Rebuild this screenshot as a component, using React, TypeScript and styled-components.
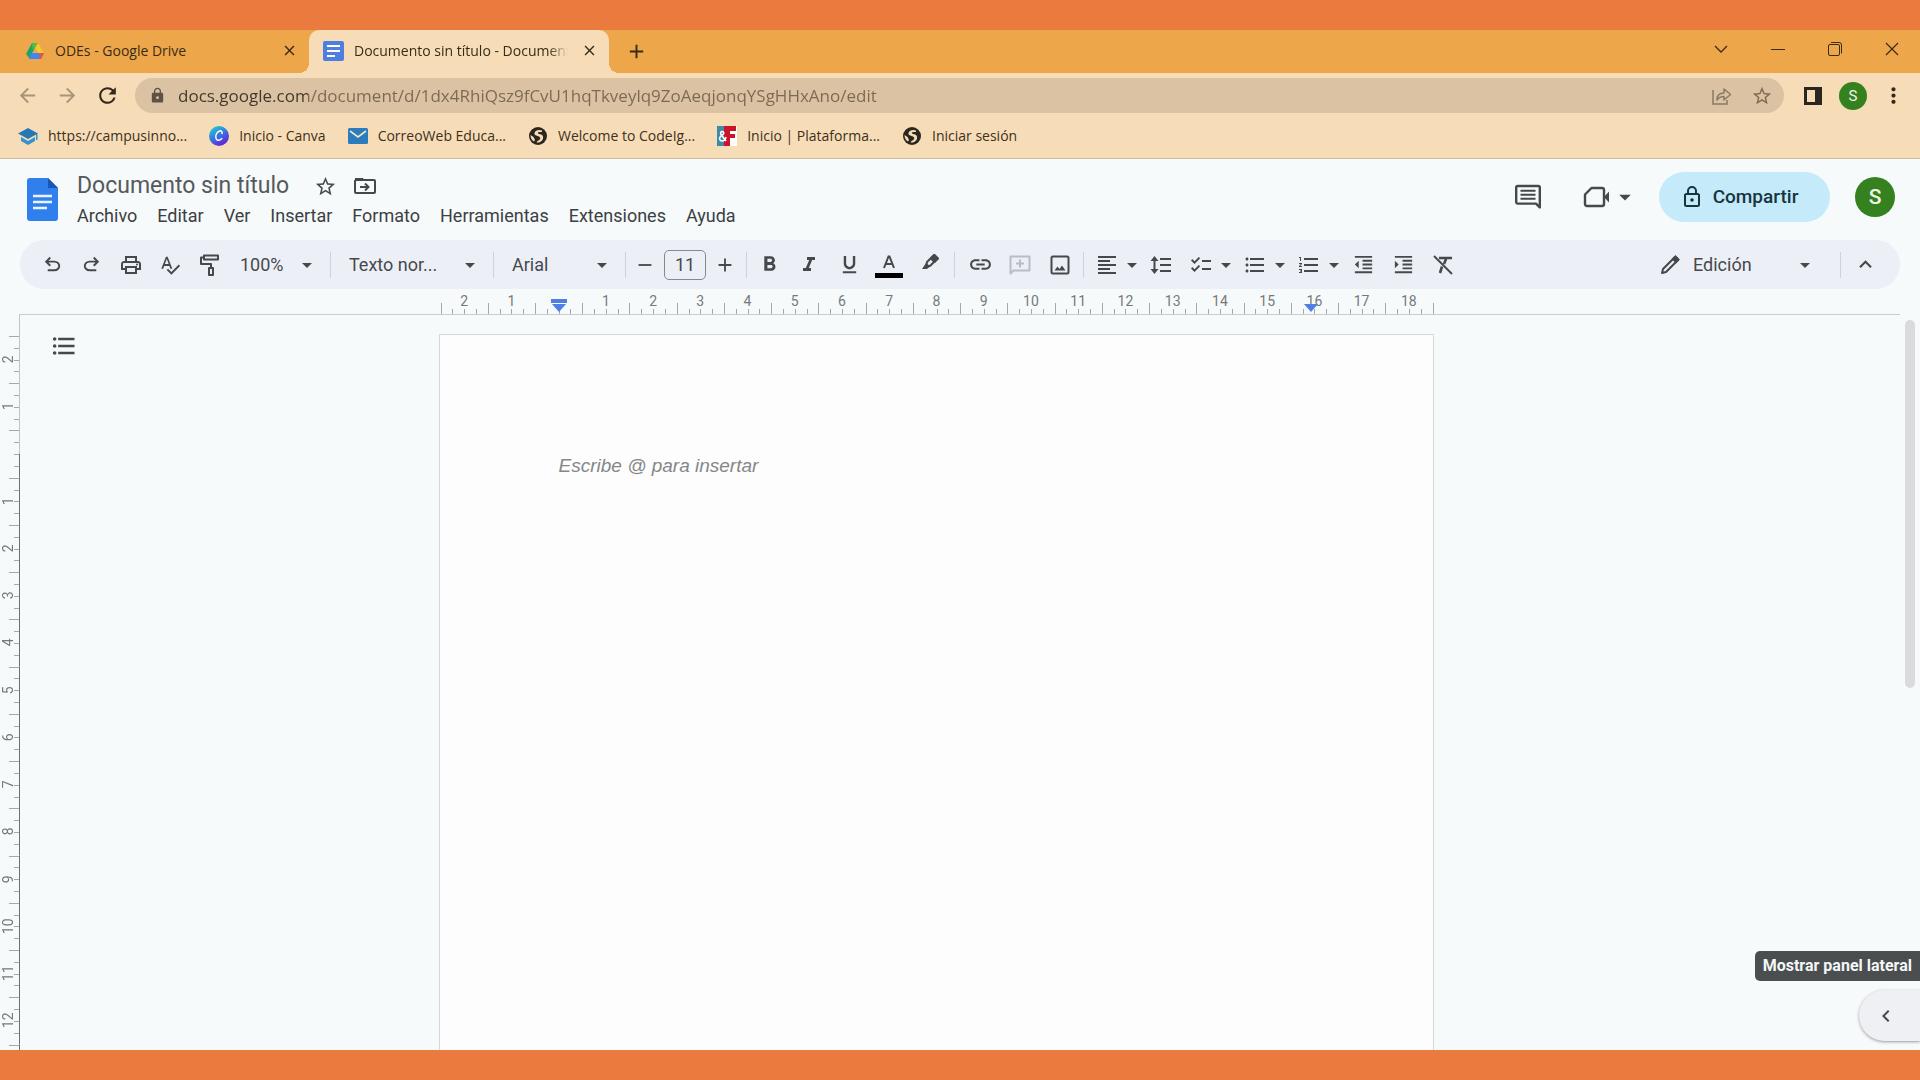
import React, { useEffect, useState } from "react";
import styled, { createGlobalStyle, css } from "styled-components";
import {
  MdOutlinePrint,
  MdSpellcheck,
  MdArrowDropDown,
  MdAdd,
  MdRemove,
  MdFormatBold,
  MdFormatItalic,
  MdFormatUnderlined,
  MdLink,
  MdFormatAlignLeft,
  MdChecklist,
  MdFormatListBulleted,
  MdFormatListNumbered,
  MdFormatIndentDecrease,
  MdFormatIndentIncrease,
  MdKeyboardArrowUp,
  MdKeyboardArrowLeft,
  MdArrowBack,
  MdArrowForward,
  MdRefresh,
  MdLock,
  MdStarBorder,
  MdMoreVert,
  MdClose,
} from "react-icons/md";

const chromeFont = '"Open Sans", "Noto Sans", sans-serif';
const appFont = 'Roboto, "Liberation Sans", sans-serif';
const ink = "#45494c";

const GlobalStyle = createGlobalStyle`
  * { box-sizing: border-box; }
  html, body { margin: 0; }
  body { font-family: ${appFont}; color: ${ink}; overflow: hidden; }
  button, input, select { font: inherit; color: inherit; }
`;

const Frame = styled.div`
  height: 100vh;
  padding: 30px 0;
  background: #ea7a3e;
  display: flex;
`;

const Window = styled.div`
  flex: 1;
  min-width: 0;
  display: flex;
  flex-direction: column;
  overflow: hidden;
  position: relative;
  background: #f6fafb;
`;

const plainButton = css`
  border: 0;
  padding: 0;
  margin: 0;
  background: none;
  display: flex;
  align-items: center;
  justify-content: center;
  flex: none;
  cursor: pointer;
`;

/* ---------- Browser chrome ---------- */

const TabStrip = styled.div`
  display: flex;
  height: 43px;
  flex: none;
  background: #eda74a;
  color: #3a2b16;
  font: 14px/20px ${chromeFont};
`;

const Tab = styled.div<{ $active?: boolean }>`
  flex: none;
  width: ${(p) => (p.$active ? 300 : 309)}px;
  padding: 0 9px 2px ${(p) => (p.$active ? 14 : 25)}px;
  display: flex;
  align-items: center;
  gap: 10px;
  position: relative;
  ${(p) =>
    p.$active &&
    css`
      background: #f6ddb8;
      border-radius: 10px 10px 0 0;
      &::before,
      &::after {
        content: "";
        position: absolute;
        bottom: 0;
        width: 10px;
        height: 10px;
      }
      &::before {
        left: -10px;
        background: radial-gradient(circle at 0 0, transparent 10px, #f6ddb8 10px);
      }
      &::after {
        right: -10px;
        background: radial-gradient(circle at 100% 0, transparent 10px, #f6ddb8 10px);
      }
    `}
`;

const TabTitle = styled.span<{ $fade?: boolean }>`
  flex: 1;
  min-width: 0;
  overflow: hidden;
  white-space: nowrap;
  ${(p) => p.$fade && css`mask-image: linear-gradient(to right, #000 91%, transparent);`}
`;

const TabClose = styled.button`
  ${plainButton}
  width: 22px;
  height: 22px;
`;

const NewTab = styled.button`
  ${plainButton}
  width: 54px;
`;

const WindowControls = styled.div`
  margin-left: auto;
  display: flex;
  padding-bottom: 6px;
`;

const WindowButton = styled.button`
  ${plainButton}
  width: 57px;
`;

const AddressRow = styled.div`
  height: 45px;
  flex: none;
  background: #f6ddb8;
  display: flex;
  align-items: center;
  padding: 0 7px;
  color: #3a2b16;
`;

const NavButton = styled.button<{ $muted?: boolean }>`
  ${plainButton}
  width: 40px;
  height: 36px;
  color: ${(p) => (p.$muted ? "#a8947a" : "#33281a")};
`;

const Omnibox = styled.div`
  flex: 1;
  margin: 0 9px 0 8px;
  height: 35px;
  border-radius: 18px;
  background: #dac2a2;
  display: flex;
  align-items: center;
  padding: 0 2px 0 14px;
`;

const UrlLabel = styled.label`
  flex: 1;
  display: grid;
  align-items: center;
  font: 17px/24px ${chromeFont};
  margin-left: 12px;
  & > * {
    grid-area: 1 / 1;
  }
`;

const UrlInput = styled.input`
  width: 100%;
  border: 0;
  padding: 0;
  outline: 0;
  color: transparent;
  background: linear-gradient(to right, #40362a 130px, #7b6952 130px);
  background-clip: text;
  caret-color: #40362a;
`;

const BookmarkBar = styled.nav`
  height: 41px;
  flex: none;
  background: #f6ddb8;
  border-bottom: 1px solid #cdb9a0;
  display: flex;
  align-items: center;
  gap: 22px;
  padding: 0 18px 4px;
`;

const Bookmark = styled.a`
  display: flex;
  align-items: center;
  gap: 10px;
  color: #40301c;
  text-decoration: none;
  white-space: nowrap;
  font: 14px/20px ${chromeFont};
`;

const Avatar = styled.button<{ $large?: boolean }>`
  ${plainButton}
  width: ${(p) => (p.$large ? 40 : 28)}px;
  height: ${(p) => (p.$large ? 40 : 28)}px;
  border-radius: 50%;
  background: #35801f;
  color: #eef6ea;
  font-size: ${(p) => (p.$large ? 21 : 15)}px;
  font-weight: ${(p) => (p.$large ? 500 : 400)};
`;

/* ---------- Document header ---------- */

const Header = styled.header`
  height: 81px;
  flex: none;
  display: flex;
  align-items: flex-start;
  padding: 12px 25px 0 26px;
`;

const LogoLink = styled.a`
  flex: none;
  margin: 7px 17px 0 0;
  display: block;
  height: 44px;
`;

const TitleBlock = styled.div`
  display: flex;
  flex-direction: column;
`;

const TitleRow = styled.div`
  display: flex;
  align-items: center;
  height: 30px;
`;

const DocTitle = styled.h1`
  margin: 0 16px 0 0;
  font: 400 23px/30px ${appFont};
  color: #55595c;
`;

const TitleIcon = styled.button`
  ${plainButton}
  width: 40px;
  height: 30px;
`;

const MenuBar = styled.nav`
  display: flex;
  gap: 20px;
  height: 30px;
`;

const MenuItem = styled.button`
  ${plainButton}
  font-size: 18px;
  line-height: 30px;
  color: #3c4043;
`;

const HeaderActions = styled.div`
  margin-left: auto;
  height: 52px;
  display: flex;
  align-items: center;
`;

const HeaderButton = styled.button<{ $gap: number }>`
  ${plainButton}
  height: 40px;
  margin-right: ${(p) => p.$gap}px;
`;

const ShareButton = styled.button`
  ${plainButton}
  width: 171px;
  height: 50px;
  margin-right: 25px;
  padding-right: 8px;
  border-radius: 25px;
  background: #c5eafa;
  color: #17353f;
  gap: 12px;
  font: 500 19px/24px ${appFont};
`;

/* ---------- Toolbar ---------- */

const Toolbar = styled.div`
  height: 49px;
  flex: none;
  margin: 0 20px;
  padding: 0 15px 0 13px;
  border-radius: 25px;
  background: #edeff7;
  display: flex;
  align-items: center;
  font-size: 18px;
`;

const Tool = styled.button<{ $w?: number; $muted?: boolean }>`
  ${plainButton}
  width: ${(p) => p.$w || 40}px;
  height: 36px;
  color: ${(p) => (p.$muted ? "#b9bcc2" : ink)};
`;

const ComboTool = styled.button`
  ${plainButton}
  width: 54px;
  height: 36px;
  padding-left: 8px;
  gap: 1px;
  justify-content: flex-start;
  & > svg {
    flex: none;
  }
`;

const Divider = styled.span<{ $space?: number }>`
  flex: none;
  width: 1px;
  height: 26px;
  margin: 0 ${(p) => p.$space || 0}px;
  background: #cfd2d8;
`;

const Picker = styled.label<{ $w: number; $after?: number }>`
  flex: none;
  width: ${(p) => p.$w}px;
  margin-right: ${(p) => p.$after || 0}px;
  display: grid;
  align-items: center;
  & > * {
    grid-area: 1 / 1;
  }
  & > svg {
    justify-self: end;
    margin-right: 11px;
    pointer-events: none;
  }
`;

const Select = styled.select<{ $pad: number }>`
  appearance: none;
  width: 100%;
  height: 32px;
  border: 0;
  outline: 0;
  padding: 0 0 0 ${(p) => p.$pad}px;
  background: none;
`;

const SizeInput = styled.input`
  width: 42px;
  height: 30px;
  padding: 0;
  border: 1px solid #85898d;
  border-radius: 5px;
  background: none;
  text-align: center;
`;

const ModePicker = styled.div`
  margin-left: auto;
  display: flex;
  align-items: center;
`;

/* ---------- Rulers and page ---------- */

const HorizontalRuler = styled.div`
  flex: none;
  height: 26px;
  margin: 0 20px 0 19px;
  border-bottom: 1px solid #c9cdd0;
  padding-right: 46px;
  display: flex;
  justify-content: center;
`;

const RulerScale = styled.div`
  width: 992px;
  display: grid;
  grid-template-columns: repeat(21, 1fr);
  position: relative;
`;

const Cell = styled.div<{ $vertical?: boolean; $line?: string }>`
  display: grid;
  grid-template: 1fr / 1fr;
  align-items: ${(p) => (p.$vertical ? "stretch" : "end")};
  justify-items: ${(p) => (p.$vertical ? "end" : "stretch")};
  & > * {
    grid-area: 1 / 1;
  }
  ${(p) =>
    p.$vertical &&
    css`
      padding-right: 1px;
      background: ${p.$line} right / 1px 100% no-repeat;
    `}
`;

const RulerNumber = styled.span<{ $vertical?: boolean }>`
  font: 14px/16px ${appFont};
  color: #76797b;
  ${(p) =>
    p.$vertical
      ? css`
          writing-mode: vertical-rl;
          rotate: 180deg;
          text-align: center;
          justify-self: start;
          width: 16px;
        `
      : css`
          text-align: center;
          align-self: start;
          padding-top: 4px;
        `}
`;

const Ticks = styled.span<{ $vertical?: boolean }>`
  display: flex;
  flex-direction: ${(p) => (p.$vertical ? "column" : "row")};
  align-items: flex-end;
  & > i {
    flex: 1;
    ${(p) =>
      p.$vertical
        ? css`width: 5px; border-top: 1px solid #a4a8ab;`
        : css`height: 5px; border-left: 1px solid #a4a8ab;`}
  }
  & > i:first-child {
    ${(p) => (p.$vertical ? "width: 10px;" : "height: 11px;")}
  }
`;

const LastTick = styled.span`
  position: absolute;
  right: -1px;
  bottom: 0;
  width: 1px;
  height: 11px;
  background: #a4a8ab;
`;

const Marker = styled.svg<{ $cm: number }>`
  position: absolute;
  bottom: 2px;
  left: calc(100% * ${(p) => p.$cm} / 21 - 8px);
`;

const Workspace = styled.main`
  flex: 1;
  min-height: 0;
  display: flex;
`;

const VerticalRuler = styled.div`
  flex: none;
  width: 20px;
  overflow: hidden;
`;

const VerticalGap = styled.div`
  height: 21px;
  border-right: 1px solid #c0c4c7;
`;

const VerticalScale = styled.div`
  height: 1417px;
  display: grid;
  grid-template-rows: repeat(30, 1fr);
`;

const Canvas = styled.div`
  flex: 1;
  min-width: 0;
  display: flex;
  justify-content: center;
  padding: 19px 53px 0 0;
  overflow: hidden;
  position: relative;
`;

const OutlineButton = styled.button`
  ${plainButton}
  position: absolute;
  left: 28px;
  top: 15px;
  width: 32px;
  height: 32px;
`;

const Sheet = styled.article`
  flex: none;
  width: 995px;
  height: 1404px;
  border: 1px solid #d3d9dc;
  background: #fdfdfd;
  padding: 118px 119px;
  font: italic 19px/26px "Liberation Sans", Arial, sans-serif;
  color: #858788;
`;

const Hint = styled.p`
  margin: 0;
`;

const ScrollTrack = styled.div`
  flex: none;
  width: 15px;
  padding-top: 5px;
`;

const ScrollThumb = styled.div`
  width: 10px;
  height: 368px;
  border-radius: 5px;
  background: #d9dbdf;
`;

const SidePanelCorner = styled.aside`
  position: absolute;
  right: 0;
  bottom: 9px;
  display: flex;
  flex-direction: column;
  align-items: flex-end;
  gap: 9px;
`;

const Tooltip = styled.div`
  padding: 0 8px;
  border-radius: 5px 0 0 5px;
  background: #4a4e50;
  color: #f4f6f6;
  font: 700 16px/30px ${appFont};
`;

const SideToggle = styled.button`
  ${plainButton}
  width: 61px;
  height: 51px;
  padding-right: 8px;
  border-radius: 26px 0 0 26px;
  background: #eef0f3;
  box-shadow: 0 1px 3px rgba(60, 64, 67, 0.5);
`;

/* ---------- Drawn icons ---------- */

const Symbol = ({ d, size = 24 }: { d: string; size?: number }) => (
  <svg width={size} height={size} viewBox="0 -960 960 960" fill="currentColor" aria-hidden>
    <path d={d} />
  </svg>
);

const undoPath =
  "M280-200v-80h284q63 0 109.5-40T720-420q0-60-46.5-100T564-560H312l104 104-56 56-200-200 200-200 56 56-104 104h252q97 0 167 63t70 157q0 94-70 157t-167 63H280Z";
const redoPath =
  "M396-200q-97 0-167-63t-70-157q0-94 70-157t167-63h252L544-744l56-56 200 200-200 200-56-56 104-104H396q-63 0-109.5 40T240-420q0 60 46.5 100T396-280h284v80H396Z";

const DriveLogo = () => (
  <svg width="20" height="20" viewBox="0 0 20 20" aria-hidden>
    <path d="M7 2h6L5 18 1 13z" fill="#1fa463" />
    <path d="M7 2h6l-2 4-3 3z" fill="#4cc04a" />
    <path d="M13 2l6 10h-6L10 7z" fill="#fbc52c" />
    <path d="M6 12h13l-3 6H4z" fill="#4285f4" />
    <path d="M15 12h4l-3 6h-2z" fill="#e65340" />
    <path d="M10 7l3 5H7z" fill="#eda74a" />
  </svg>
);

const DocsFavicon = () => (
  <svg width="21" height="20" viewBox="0 0 21 20" aria-hidden>
    <rect width="21" height="20" rx="2" fill="#4c7fe0" />
    <path d="M4 5h13M4 10h13M4 15h8" stroke="#fff" strokeWidth="2" />
  </svg>
);

const DocsLogo = () => (
  <svg width="34" height="44" viewBox="0 0 34 44" aria-hidden>
    <path d="M4 0h18l10 10v30a3 3 0 0 1-3 3H4a3 3 0 0 1-3-3V3a3 3 0 0 1 3-3z" fill="#2f80ed" />
    <path d="M22 0l10 10H22z" fill="#1757b8" />
    <path d="M7 18h19M7 24h19M7 30h14" stroke="#eaf3ff" strokeWidth="2.4" />
  </svg>
);

const CampusIcon = () => (
  <svg width="20" height="20" viewBox="0 0 20 20" aria-hidden>
    <path d="M10 2l10 5.500-10 5.500L0 7.500z" fill="#2777b4" />
    <path d="M3 11l7 4 7-4v4l-7 4-7-4z" fill="#3492cf" />
    <path d="M18 8h1.500v6H18z" fill="#3492cf" />
  </svg>
);

const CanvaIcon = () => (
  <svg width="20" height="20" viewBox="0 0 20 20" aria-hidden>
    <defs>
      <linearGradient id="canva" x1="0.2" y1="0" x2="0.8" y2="1">
        <stop offset="0" stopColor="#1fd0cf" />
        <stop offset="0.5" stopColor="#3a6fe0" />
        <stop offset="1" stopColor="#6a14d8" />
      </linearGradient>
    </defs>
    <circle cx="10" cy="10" r="10" fill="url(#canva)" />
    <path
      d="M13 7.500c.5-2-1-3-2.500-2.500C8 6 6.500 9 6.800 11.500c.3 3 3.200 4 6 1"
      fill="none"
      stroke="#fff"
      strokeWidth="1.500"
      strokeLinecap="round"
    />
  </svg>
);

const MailIcon = () => (
  <svg width="20" height="20" viewBox="0 0 20 20" aria-hidden>
    <rect y="2" width="20" height="16" rx="1.500" fill="#2a7cbd" />
    <path d="M2 5l8 6 8-6" fill="none" stroke="#f3e4cc" strokeWidth="1.600" />
  </svg>
);

const GlobeIcon = () => (
  <svg width="20" height="20" viewBox="0 0 20 20" aria-hidden>
    <circle cx="10" cy="10" r="9" fill="#2b2620" />
    <path
      d="M14 4.500c-3-1.500-7 0-7.500 2.500S9 9.500 11 10.500s1.500 3.500-1.500 4.500l-1 1.500c5 .5 7-3 6.500-6-.5-2.500-4-2-5-3.200S12 6 14 6z"
      fill="#f6ddb8"
    />
    <path d="M2.500 9l3 2 1.500 3-1 1.500C3.500 14 2.500 11.500 2.500 9z" fill="#f6ddb8" />
  </svg>
);

const BlockIcon = () => (
  <svg width="20" height="20" viewBox="0 0 20 20" aria-hidden>
    <rect width="20" height="20" fill="#fff" />
    <rect width="8" height="20" fill="#3f8aa8" />
    <path d="M7 0h12v5h-6v3h5v4h-5v8H7z" fill="#c9142c" />
    <path
      d="M9 15L4 8.500C3 7 4 5.500 5.300 5.500S7.500 7 6 8.500L3.500 10.500C1.500 12.500 3 15 5 15s3.500-2 4-4"
      fill="none"
      stroke="#fff"
      strokeWidth="1.600"
    />
  </svg>
);

const ShareArrow = () => (
  <svg width="22" height="20" viewBox="0 0 22 20" fill="none" stroke="#8b7a63" strokeWidth="1.500" aria-hidden>
    <path d="M2 4v14h14v-4" />
    <path d="M6 14c0-5 3-7 7-7V3l6.500 5.500L13 14v-3.500c-3 0-5 .5-7 3.500z" strokeLinejoin="round" />
  </svg>
);

const PanelIcon = () => (
  <svg width="18" height="18" viewBox="0 0 18 18" aria-hidden>
    <path d="M0 0h18v18H0zM3 3v12h8V3z" fill="#2b2620" fillRule="evenodd" />
  </svg>
);

const MoveFolder = () => (
  <svg width="22" height="18" viewBox="0 0 22 18" fill="none" stroke="currentColor" strokeWidth="2" aria-hidden>
    <path d="M2 3h18a1 1 0 0 1 1 1v11a1 1 0 0 1-1 1H2a1 1 0 0 1-1-1V4z" />
    <path d="M1 1h8l2 3H1z" fill="currentColor" stroke="none" />
    <path d="M6 10h8M11 6.500l3.500 3.500-3.500 3.500" />
  </svg>
);

const CommentIcon = () => (
  <svg width="26" height="26" viewBox="0 0 26 26" fill="none" stroke="currentColor" strokeWidth="2.400" aria-hidden>
    <path
      d="M24.800 23.500V3.500a1.500 1.500 0 0 0-1.500-1.500H2.700a1.500 1.500 0 0 0-1.500 1.500v14.600a1.500 1.500 0 0 0 1.500 1.500H21z"
      strokeLinejoin="round"
    />
    <path d="M5.500 6.800h15M5.500 10.800h15M5.500 14.800h15" strokeWidth="2" />
  </svg>
);

const MeetIcon = () => (
  <svg width="28" height="24" viewBox="0 0 28 24" fill="none" stroke="currentColor" strokeWidth="2.400" aria-hidden>
    <path d="M8.500 3H19a2 2 0 0 1 2 2v14a2 2 0 0 1-2 2H4a2 2 0 0 1-2-2V9.500z" strokeLinejoin="round" />
    <path d="M21 12l5-5.500v11z" fill="currentColor" stroke="none" />
  </svg>
);

const LockOutline = () => (
  <svg width="18" height="22" viewBox="0 0 18 22" fill="none" stroke="currentColor" strokeWidth="2" aria-hidden>
    <rect x="2" y="8" width="14" height="12" rx="1.500" />
    <path d="M5 8V5a4 4 0 0 1 8 0v3" />
    <circle cx="9" cy="14" r="1.800" fill="currentColor" stroke="none" />
  </svg>
);

const PaintRoller = () => (
  <svg width="24" height="24" viewBox="0 0 24 24" fill="none" stroke="currentColor" strokeWidth="2" aria-hidden>
    <path d="M7 2.500h14v4H7zM7 4.500H4V11h10v3" strokeLinejoin="round" />
    <path d="M12 15h4v7h-4z" strokeLinejoin="round" />
  </svg>
);

const TextColor = () => (
  <svg width="28" height="28" viewBox="0 0 28 28" aria-hidden>
    <path d="M0 22h28v5H0z" fill="#000" />
    <path d="M9 17L13.500 5.500h1L19 17M10.500 13h7" fill="none" stroke="currentColor" strokeWidth="2" />
  </svg>
);

const Highlighter = () => (
  <svg width="24" height="24" viewBox="0 0 24 24" fill="none" stroke="currentColor" strokeWidth="2" aria-hidden>
    <path d="M10 9l7-7 3.500 3.500-7 7-4.500 2z" strokeLinejoin="round" />
    <path d="M14 5.500L17.500 2 21 5.500 17.500 9z" fill="currentColor" strokeLinejoin="round" />
    <path d="M5 16l4-6 4 3-3 3z" fill="currentColor" stroke="none" />
  </svg>
);

const AddCommentIcon = () => (
  <svg width="22" height="22" viewBox="0 0 22 22" fill="none" stroke="currentColor" strokeWidth="2" aria-hidden>
    <path d="M1.500 19.500v-17h19v14h-16z" strokeLinejoin="round" />
    <path d="M11 5.500v8M7 9.500h8" />
  </svg>
);

const LineSpacing = () => (
  <svg width="22" height="22" viewBox="0 0 22 22" fill="none" stroke="currentColor" strokeWidth="2" aria-hidden>
    <path d="M10 5h11M10 11h11M10 17h11M4.500 4v14" />
    <path d="M4.500 2L8.500 7h-8zM4.500 20l4-5h-8z" fill="currentColor" stroke="none" />
  </svg>
);

const ImageIcon = () => (
  <svg width="20" height="20" viewBox="0 0 20 20" fill="none" stroke="currentColor" strokeWidth="2" aria-hidden>
    <rect x="1.500" y="1.500" width="17" height="17" rx="1.500" />
    <path d="M4.500 15.500l3-4 2 2.500 2.500-3.500 3.500 5z" fill="currentColor" stroke="none" />
  </svg>
);

const ClearFormat = () => (
  <svg width="24" height="24" viewBox="0 0 24 24" fill="none" stroke="currentColor" strokeWidth="2" aria-hidden>
    <path d="M3 3l18 18" />
    <path d="M8 5h13M15 6l-2 5M11 13.500L9 20" strokeWidth="2.600" />
  </svg>
);

const PencilIcon = () => (
  <svg width="22" height="22" viewBox="0 0 22 22" fill="none" stroke="currentColor" strokeWidth="2" aria-hidden>
    <path d="M3 19l1-4L16 3l3 3L7 18z" strokeLinejoin="round" />
    <path d="M14 5l2.500-2.500 3 3L17 8z" fill="currentColor" />
  </svg>
);

/* ---------- Data ---------- */

const bookmarks = [
  { label: "https://campusinno...", icon: <CampusIcon /> },
  { label: "Inicio - Canva", icon: <CanvaIcon /> },
  { label: "CorreoWeb Educa...", icon: <MailIcon /> },
  { label: "Welcome to CodeIg...", icon: <GlobeIcon /> },
  { label: "Inicio | Plataforma...", icon: <BlockIcon /> },
  { label: "Iniciar sesión", icon: <GlobeIcon /> },
];

const menus = ["Archivo", "Editar", "Ver", "Insertar", "Formato", "Herramientas", "Extensiones", "Ayuda"];
const horizontalMarks = Array.from({ length: 21 }, (_, i) => i - 2);
const verticalMarks = Array.from({ length: 30 }, (_, i) => i - 2);

const lightLine = "linear-gradient(#c0c4c7, #c0c4c7)";
const darkLine = "linear-gradient(#6b7073, #6b7073)";
const splitLine = "linear-gradient(#c0c4c7 50%, #6b7073 50%)";

/* Last centimetre whose number fits above the bottom edge of the window. */
const lastLabel = () => Math.floor((window.innerHeight - 377) / 47 - 0.5) - 2;

const useLastLabel = () => {
  const [last, setLast] = useState(lastLabel);
  useEffect(() => {
    const update = () => setLast(lastLabel());
    window.addEventListener("resize", update);
    return () => window.removeEventListener("resize", update);
  }, []);
  return last;
};

const TickRow = ({ vertical }: { vertical?: boolean }) => (
  <Ticks $vertical={vertical}>
    <i />
    <i />
    <i />
    <i />
  </Ticks>
);

const Combo = ({ label, children }: { label: string; children: React.ReactNode }) => (
  <ComboTool aria-label={label}>
    {children}
    <MdArrowDropDown size={24} />
  </ComboTool>
);

const BrowserChrome = () => (
  <>
    <TabStrip>
      <Tab>
        <DriveLogo />
        <TabTitle>ODEs - Google Drive</TabTitle>
        <TabClose aria-label="Cerrar pestaña">
          <MdClose size={17} />
        </TabClose>
      </Tab>
      <Tab $active>
        <DocsFavicon />
        <TabTitle $fade>Documento sin título - Documentos</TabTitle>
        <TabClose aria-label="Cerrar pestaña">
          <MdClose size={17} />
        </TabClose>
      </Tab>
      <NewTab aria-label="Nueva pestaña">
        <MdAdd size={23} />
      </NewTab>
      <WindowControls>
        <WindowButton aria-label="Buscar pestañas">
          <svg width="14" height="14" viewBox="0 0 14 14" fill="none" stroke="currentColor" strokeWidth="1.300">
            <path d="M1 4l6 6 6-6" />
          </svg>
        </WindowButton>
        <WindowButton aria-label="Minimizar">
          <svg width="14" height="14" viewBox="0 0 14 14" stroke="currentColor">
            <path d="M0 7.500h14" />
          </svg>
        </WindowButton>
        <WindowButton aria-label="Restaurar">
          <svg width="14" height="14" viewBox="0 0 14 14" fill="none" stroke="currentColor">
            <rect x="0.5" y="2.5" width="11" height="11" rx="1.500" />
            <path d="M3 .5h8a2.500 2.500 0 0 1 2.500 2.500v8.500" />
          </svg>
        </WindowButton>
        <WindowButton aria-label="Cerrar">
          <svg width="14" height="14" viewBox="0 0 14 14" stroke="currentColor" strokeWidth="1.200">
            <path d="M1 1l12 12M13 1L1 13" />
          </svg>
        </WindowButton>
      </WindowControls>
    </TabStrip>
    <AddressRow>
      <NavButton $muted aria-label="Atrás">
        <MdArrowBack size={23} />
      </NavButton>
      <NavButton $muted aria-label="Adelante">
        <MdArrowForward size={23} />
      </NavButton>
      <NavButton aria-label="Recargar">
        <MdRefresh size={25} />
      </NavButton>
      <Omnibox>
        <MdLock size={17} color="#5d5244" />
        <UrlLabel>
          <UrlInput
            aria-label="Dirección"
            defaultValue="docs.google.com/document/d/1dx4RhiQsz9fCvU1hqTkveylq9ZoAeqjonqYSgHHxAno/edit"
          />
        </UrlLabel>
        <NavButton $muted aria-label="Compartir página">
          <ShareArrow />
        </NavButton>
        <NavButton $muted aria-label="Añadir a favoritos">
          <MdStarBorder size={22} color="#7d6c56" />
        </NavButton>
      </Omnibox>
      <NavButton aria-label="Panel lateral">
        <PanelIcon />
      </NavButton>
      <NavButton as="div">
        <Avatar aria-label="Perfil">S</Avatar>
      </NavButton>
      <NavButton aria-label="Más opciones">
        <MdMoreVert size={25} />
      </NavButton>
    </AddressRow>
    <BookmarkBar>
      {bookmarks.map((b) => (
        <Bookmark href="#" key={b.label}>
          {b.icon}
          {b.label}
        </Bookmark>
      ))}
    </BookmarkBar>
  </>
);

const DocumentHeader = () => (
  <Header>
    <LogoLink href="#" aria-label="Documentos">
      <DocsLogo />
    </LogoLink>
    <TitleBlock>
      <TitleRow>
        <DocTitle>Documento sin título</DocTitle>
        <TitleIcon aria-label="Destacar">
          <MdStarBorder size={23} />
        </TitleIcon>
        <TitleIcon aria-label="Mover">
          <MoveFolder />
        </TitleIcon>
      </TitleRow>
      <MenuBar>
        {menus.map((m) => (
          <MenuItem key={m}>{m}</MenuItem>
        ))}
      </MenuBar>
    </TitleBlock>
    <HeaderActions>
      <HeaderButton $gap={42} aria-label="Comentarios">
        <CommentIcon />
      </HeaderButton>
      <HeaderButton $gap={20} aria-label="Reunión">
        <MeetIcon />
        <MdArrowDropDown size={28} />
      </HeaderButton>
      <ShareButton>
        <LockOutline />
        Compartir
      </ShareButton>
      <Avatar $large aria-label="Cuenta">
        S
      </Avatar>
    </HeaderActions>
  </Header>
);

const EditorToolbar = () => (
  <Toolbar role="toolbar">
    <Tool $w={39} aria-label="Deshacer">
      <Symbol d={undoPath} size={23} />
    </Tool>
    <Tool $w={39} aria-label="Rehacer">
      <Symbol d={redoPath} size={23} />
    </Tool>
    <Tool $w={39} aria-label="Imprimir">
      <MdOutlinePrint size={24} />
    </Tool>
    <Tool $w={39} aria-label="Ortografía">
      <MdSpellcheck size={22} />
    </Tool>
    <Tool $w={39} aria-label="Copiar formato">
      <PaintRoller />
    </Tool>
    <Picker $w={102}>
      <Select $pad={12} aria-label="Zoom">
        <option>100%</option>
      </Select>
      <MdArrowDropDown size={24} />
    </Picker>
    <Divider />
    <Picker $w={162}>
      <Select $pad={18} aria-label="Estilo">
        <option>Texto nor...</option>
      </Select>
      <MdArrowDropDown size={24} />
    </Picker>
    <Divider />
    <Picker $w={131}>
      <Select $pad={18} aria-label="Fuente">
        <option>Arial</option>
      </Select>
      <MdArrowDropDown size={24} />
    </Picker>
    <Divider />
    <Tool $w={38} aria-label="Reducir tamaño">
      <MdRemove size={22} />
    </Tool>
    <SizeInput aria-label="Tamaño de fuente" defaultValue="11" />
    <Tool $w={38} aria-label="Aumentar tamaño">
      <MdAdd size={22} />
    </Tool>
    <Divider $space={2} />
    <Tool aria-label="Negrita">
      <MdFormatBold size={25} />
    </Tool>
    <Tool aria-label="Cursiva">
      <MdFormatItalic size={24} />
    </Tool>
    <Tool aria-label="Subrayado">
      <MdFormatUnderlined size={23} />
    </Tool>
    <Tool aria-label="Color del texto">
      <TextColor />
    </Tool>
    <Tool aria-label="Resaltar">
      <Highlighter />
    </Tool>
    <Divider $space={5} />
    <Tool aria-label="Enlace">
      <MdLink size={25} />
    </Tool>
    <Tool $muted aria-label="Añadir comentario">
      <AddCommentIcon />
    </Tool>
    <Tool aria-label="Imagen">
      <ImageIcon />
    </Tool>
    <Divider $space={3} />
    <Combo label="Alinear">
      <MdFormatAlignLeft size={24} />
    </Combo>
    <Tool aria-label="Interlineado">
      <LineSpacing />
    </Tool>
    <Combo label="Lista de control">
      <MdChecklist size={24} />
    </Combo>
    <Combo label="Viñetas">
      <MdFormatListBulleted size={24} />
    </Combo>
    <Combo label="Numeración">
      <MdFormatListNumbered size={24} />
    </Combo>
    <Tool aria-label="Reducir sangría">
      <MdFormatIndentDecrease size={23} />
    </Tool>
    <Tool aria-label="Aumentar sangría">
      <MdFormatIndentIncrease size={23} />
    </Tool>
    <Tool aria-label="Borrar formato">
      <ClearFormat />
    </Tool>
    <ModePicker>
      <PencilIcon />
      <Picker $w={147} $after={8}>
        <Select $pad={12} aria-label="Modo">
          <option>Edición</option>
        </Select>
        <MdArrowDropDown size={24} />
      </Picker>
      <Divider $space={4} />
      <Tool aria-label="Ocultar menús">
        <MdKeyboardArrowUp size={25} />
      </Tool>
    </ModePicker>
  </Toolbar>
);

const Ruler = () => (
  <HorizontalRuler>
    <RulerScale>
      {horizontalMarks.map((n) => (
        <Cell key={n}>
          <TickRow />
          {n !== 0 && <RulerNumber>{Math.abs(n)}</RulerNumber>}
        </Cell>
      ))}
      <LastTick />
      <Marker $cm={2.5} width="16" height="13" viewBox="0 0 16 13" fill="#4f7fe3">
        <path d="M0 0h16v4H0zM1 5h14L8 13z" />
      </Marker>
      <Marker $cm={18.42} width="16" height="13" viewBox="0 0 16 13" fill="#4f7fe3">
        <path d="M1 5h14L8 13z" />
      </Marker>
    </RulerScale>
  </HorizontalRuler>
);

const SideRuler = () => {
  const last = useLastLabel();
  return (
    <VerticalRuler>
      <VerticalGap />
      <VerticalScale>
        {verticalMarks.map((n) => (
          <Cell key={n} $vertical $line={n > 0 ? darkLine : n < 0 ? lightLine : splitLine}>
            <TickRow vertical />
            {n !== 0 && n <= last && <RulerNumber $vertical>{Math.abs(n)}</RulerNumber>}
          </Cell>
        ))}
      </VerticalScale>
    </VerticalRuler>
  );
};

export default function App() {
  return (
    <>
      <GlobalStyle />
      <Frame>
        <Window>
          <BrowserChrome />
          <DocumentHeader />
          <EditorToolbar />
          <Ruler />
          <Workspace>
            <SideRuler />
            <Canvas>
              <OutlineButton aria-label="Mostrar esquema">
                <MdFormatListBulleted size={28} />
              </OutlineButton>
              <Sheet>
                <Hint>Escribe @ para insertar</Hint>
              </Sheet>
            </Canvas>
            <ScrollTrack>
              <ScrollThumb />
            </ScrollTrack>
          </Workspace>
          <SidePanelCorner>
            <Tooltip role="tooltip">Mostrar panel lateral</Tooltip>
            <SideToggle aria-label="Mostrar panel lateral">
              <MdKeyboardArrowLeft size={24} />
            </SideToggle>
          </SidePanelCorner>
        </Window>
      </Frame>
    </>
  );
}
